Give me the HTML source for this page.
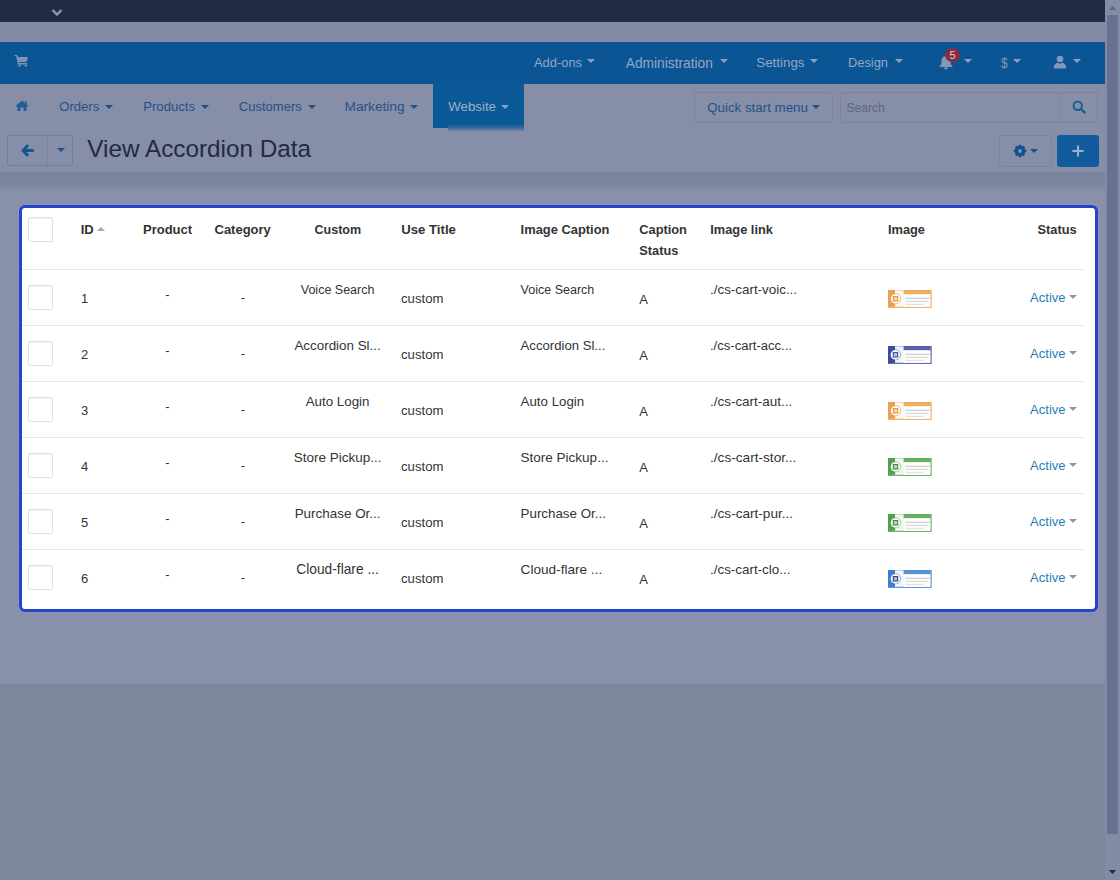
<!DOCTYPE html>
<html><head><meta charset="utf-8">
<style>
*{box-sizing:border-box}
html,body{margin:0;padding:0}
body{width:1120px;height:880px;overflow:hidden;position:relative;background:#7f879f;font-family:"Liberation Sans",sans-serif;}
.abs{position:absolute}
#topdark{left:0;top:0;width:1105px;height:22px;background:#232a43}
#gray1{left:0;top:22px;width:1105px;height:20px;background:#828aa4}
#bluenav{left:0;top:42px;width:1105px;height:42px;background:#0c5594}
#subnav{left:0;top:84px;width:1105px;height:88px;background:#878ea8}
#band{left:0;top:172px;width:1105px;height:17px;background:linear-gradient(#7a829b,#7d859e 60%,#838aa3)}
#content{left:0;top:189px;width:1105px;height:495px;background:#8990aa}
#sb{left:1105px;top:0;width:15px;height:880px;background:#848ba5}
#thumb{left:1107.3px;top:15px;width:10.7px;height:819px;background:#697190;border-radius:1px}
.nav{color:#93a7c5;white-space:nowrap}
.caret{width:0;height:0;border-left:4px solid transparent;border-right:4px solid transparent;border-top:4px solid currentColor;display:inline-block}
.sub{color:#1f5388;white-space:nowrap}
#modal{left:19px;top:204.5px;width:1079px;height:407.5px;background:#fff;border:3px solid #2a42c6;border-radius:6px;box-shadow:0 0 0 1px rgba(125,150,225,0.75)}
.th{font-weight:700;font-size:13px;color:#333;white-space:nowrap;position:absolute}
.td{font-size:13px;color:#333;white-space:nowrap;position:absolute}
.cb{position:absolute;width:24.5px;height:24.5px;border:1px solid #e0e0e0;border-radius:2px;background:#fff;box-shadow:inset 0 1px 1px rgba(0,0,0,0.05)}
.hr{position:absolute;left:3px;width:1062px;height:1px;background:#e8e8e8}
.act{position:absolute;color:#2b8bc4;font-size:13px;white-space:nowrap}
.t{position:absolute;white-space:nowrap}
</style></head>
<body>
<div id="topdark" class="abs"></div>
<svg class="abs" style="left:51px;top:8px" width="12" height="9" viewBox="0 0 12 9"><path d="M1.5 2 L6 6.5 L10.5 2" stroke="#9098b4" stroke-width="2.4" fill="none"/></svg>
<div id="gray1" class="abs"></div>
<div id="bluenav" class="abs"></div>
<div id="subnav" class="abs"></div>
<div id="band" class="abs"></div>
<div id="content" class="abs"></div>
<div id="sb" class="abs"></div>
<div id="thumb" class="abs"></div>
<svg class="abs" style="left:1105px;top:0" width="15" height="15" viewBox="0 0 15 15"><path d="M3.8 10 L7.5 5.8 L11.2 10 Z" fill="#5f6682"/></svg>
<svg class="abs" style="left:1105px;top:865px" width="15" height="15" viewBox="0 0 15 15"><path d="M3.8 5 L7.5 9.2 L11.2 5 Z" fill="#252d48"/></svg>


<!-- top nav -->
<svg class="abs" style="left:14px;top:54px" width="15" height="13" viewBox="0 0 15 13"><path d="M0.5 1 H3 L4 3 H14 L12.5 8 H5 L5.2 9 H13 V10.5 H4 L2.2 2.3 H0.5 Z" fill="#7f93b8"/><circle cx="5.5" cy="11.6" r="1.2" fill="#7f93b8"/><circle cx="12" cy="11.6" r="1.2" fill="#7f93b8"/></svg>
<svg class="abs" style="left:938px;top:55px" width="16" height="15" viewBox="0 0 16 15"><path d="M8 1 C4.5 1 3.5 4 3.5 6.5 C3.5 9.5 2 11 1 12 H15 C14 11 12.5 9.5 12.5 6.5 C12.5 4 11.5 1 8 1 Z" fill="#8597b9"/><path d="M6 12.5 A2 2 0 0 0 10 12.5 Z" fill="#8597b9"/></svg>
<div class="abs" style="left:945px;top:47.5px;width:15px;height:14px;border-radius:50%;background:#8a2c3e;color:#d0d2dc;font-size:11px;font-weight:400;text-align:center;line-height:14px">5</div>
<span class="abs caret" style="left:963.5px;top:59px;color:#8c9fc0"></span>
<div class="abs" style="left:1000.8px;top:54.5px;color:#8597b9;font-size:14px;line-height:16px;transform:scaleX(0.85);transform-origin:left">$</div>
<span class="abs caret" style="left:1013px;top:59px;color:#8c9fc0"></span>
<svg class="abs" style="left:1053px;top:55px" width="14" height="14" viewBox="0 0 14 14"><circle cx="7" cy="4" r="3.3" fill="#8597b9"/><path d="M0.8 13.5 C0.8 9.5 3 8 5 7.8 L7 9 L9 7.8 C11 8 13.2 9.5 13.2 13.5 Z" fill="#8597b9"/></svg>
<span class="abs caret" style="left:1072.5px;top:59px;color:#8c9fc0"></span>

<div class="abs nav" style="left:534px;top:57.38px;font-size:12.9px;line-height:12.9px;">Add-ons</div>
<div class="abs" style="left:587px;top:59.3px;width:0;height:0;border-left:4.0px solid transparent;border-right:4.0px solid transparent;border-top:4px solid #8c9fc0"></div>
<div class="abs nav" style="left:625.8px;top:56.65px;font-size:13.76px;line-height:13.76px;">Administration</div>
<div class="abs" style="left:719.6px;top:59.3px;width:0;height:0;border-left:4.0px solid transparent;border-right:4.0px solid transparent;border-top:4px solid #8c9fc0"></div>
<div class="abs nav" style="left:756.3px;top:56.2px;font-size:13.34px;line-height:13.34px;">Settings</div>
<div class="abs" style="left:810px;top:59.3px;width:0;height:0;border-left:4.0px solid transparent;border-right:4.0px solid transparent;border-top:4px solid #8c9fc0"></div>
<div class="abs nav" style="left:848px;top:57.42px;font-size:12.85px;line-height:12.85px;">Design</div>
<div class="abs" style="left:894.5px;top:59.3px;width:0;height:0;border-left:4.0px solid transparent;border-right:4.0px solid transparent;border-top:4px solid #8c9fc0"></div>
<div class="abs sub" style="left:59.25px;top:100.17px;font-size:13.09px;line-height:13.09px;">Orders</div>
<div class="abs" style="left:105px;top:104.5px;width:0;height:0;border-left:4.0px solid transparent;border-right:4.0px solid transparent;border-top:4px solid #1f5388"></div>
<div class="abs sub" style="left:143.25px;top:100.15px;font-size:13.11px;line-height:13.11px;">Products</div>
<div class="abs" style="left:201px;top:104.5px;width:0;height:0;border-left:4.0px solid transparent;border-right:4.0px solid transparent;border-top:4px solid #1f5388"></div>
<div class="abs sub" style="left:238.8px;top:100.22px;font-size:13.03px;line-height:13.03px;">Customers</div>
<div class="abs" style="left:307.7px;top:104.5px;width:0;height:0;border-left:4.0px solid transparent;border-right:4.0px solid transparent;border-top:4px solid #1f5388"></div>
<div class="abs sub" style="left:344.6px;top:99.68px;font-size:13.67px;line-height:13.67px;">Marketing</div>
<div class="abs" style="left:410px;top:104.5px;width:0;height:0;border-left:4.0px solid transparent;border-right:4.0px solid transparent;border-top:4px solid #1f5388"></div>
<!-- sub nav -->
<svg class="abs" style="left:15px;top:100px" width="14" height="11" viewBox="0 0 14 11"><path d="M7 0.5 L13.5 6 L12.5 7 L11.5 6.2 V11 H8.5 V7.5 H5.5 V11 H2.5 V6.2 L1.5 7 L0.5 6 Z" fill="#1f5d9c"/><rect x="10" y="1" width="1.6" height="3" fill="#1f5d9c"/></svg>
<div class="abs" style="left:433px;top:83px;width:91px;height:45px;background:#0b5896"></div><div class="abs" style="left:448px;top:124px;width:76px;height:7.5px;background:linear-gradient(#0b5896,#3d6a9c 50%,rgba(135,142,168,0))"></div>
<div class="abs sub" style="left:448.3px;top:100.02px;font-size:13.27px;line-height:13.27px;color:#9fb0c8;">Website</div>
<div class="abs" style="left:501px;top:104.5px;width:0;height:0;border-left:4.0px solid transparent;border-right:4.0px solid transparent;border-top:4px solid #8c9fc0"></div>
<div class="abs sub" style="left:707.2px;top:100.81px;font-size:13.34px;line-height:13.34px;">Quick start menu</div>
<div class="abs" style="left:812px;top:105px;width:0;height:0;border-left:4.0px solid transparent;border-right:4.0px solid transparent;border-top:4px solid #1f5388"></div>

<div class="abs" style="left:693.5px;top:91.5px;width:139px;height:31px;border:1px solid #7c839c;border-radius:3px"></div>
<div class="abs" style="left:839.5px;top:91.5px;width:258.5px;height:31px;border:1px solid #7c839c;border-radius:3px"></div>
<div class="abs" style="left:1058.5px;top:92px;width:1px;height:30px;background:#7c839c"></div>
<div class="abs" style="left:846.4px;top:101.6px;font-size:12.1px;line-height:13px;color:#5e6682">Search</div>
<svg class="abs" style="left:1072px;top:99.5px" width="14" height="14" viewBox="0 0 14 14"><circle cx="5.8" cy="5.8" r="4.2" stroke="#1b5d8f" stroke-width="2" fill="none"/><path d="M9 9 L12.5 12.5" stroke="#1b5d8f" stroke-width="2.4" stroke-linecap="round"/></svg>

<!-- title row -->
<div class="abs" style="left:6.5px;top:134.5px;width:66px;height:31px;border:1px solid #767d96;border-radius:2px"></div>
<div class="abs" style="left:47px;top:135px;width:1px;height:30px;background:#7c839c"></div>
<svg class="abs" style="left:21px;top:144px" width="13" height="13" viewBox="0 0 13 13"><path d="M6.2 2 L2 6.5 L6.2 11 M2.8 6.5 H11.5" stroke="#16558f" stroke-width="3" fill="none" stroke-linecap="round" stroke-linejoin="round"/></svg>
<span class="abs caret" style="left:56.5px;top:147.7px;color:#16558f"></span>
<div class="abs" style="left:87.3px;top:137px;font-size:24.3px;line-height:24.3px;color:#232a45;white-space:nowrap">View Accordion Data</div>
<div class="abs" style="left:999px;top:135px;width:52.5px;height:32px;border:1px solid #7c839c;border-radius:3px"></div>
<svg class="abs" style="left:1013px;top:144px" width="14" height="14" viewBox="0 0 14 14"><g fill="#164e88"><circle cx="7" cy="7" r="5"/><rect x="5.6" y="0.8" width="2.8" height="12.4" rx="0.6"/><rect x="0.8" y="5.6" width="12.4" height="2.8" rx="0.6"/><rect x="5.6" y="0.8" width="2.8" height="12.4" rx="0.6" transform="rotate(45 7 7)"/><rect x="5.6" y="0.8" width="2.8" height="12.4" rx="0.6" transform="rotate(-45 7 7)"/></g><circle cx="7" cy="7" r="1.9" fill="#6f98c8"/></svg>
<span class="abs caret" style="left:1030px;top:148.7px;color:#164e88"></span>
<div class="abs" style="left:1057px;top:135px;width:41.5px;height:32px;background:#0f5b9c;border-radius:3px"></div>
<svg class="abs" style="left:1072px;top:144.5px" width="12" height="12" viewBox="0 0 12 12"><path d="M6 1.2 V10.8 M1.2 6 H10.8" stroke="#9eb0cc" stroke-width="2.1" stroke-linecap="round"/></svg>

<div id="modal" class="abs">
</div>






<!--TABLE-->
<div class="cb" style="left:28px;top:217px"></div>
<div class="t" style="left:80.75px;top:222.90px;font-size:13px;line-height:13px;font-weight:700;color:#333;">ID</div>
<div class="abs" style="left:97px;top:227px;width:0;height:0;border-left:4px solid transparent;border-right:4px solid transparent;border-bottom:4px solid #aaa"></div>
<div class="t" style="left:143px;top:222.90px;font-size:13px;line-height:13px;font-weight:700;color:#333;">Product</div>
<div class="t" style="left:214.5px;top:222.90px;font-size:13px;line-height:13px;font-weight:700;color:#333;">Category</div>
<div class="t" style="left:314.6px;top:224.02px;font-size:12.5px;line-height:12.5px;font-weight:700;color:#333;">Custom</div>
<div class="t" style="left:401.2px;top:222.73px;font-size:13.2px;line-height:13.2px;font-weight:700;color:#333;">Use Title</div>
<div class="t" style="left:520.6px;top:223.58px;font-size:12.9px;line-height:12.9px;font-weight:700;color:#333;">Image Caption</div>
<div class="t" style="left:639.3px;top:223.66px;font-size:12.8px;line-height:12.8px;font-weight:700;color:#333;">Caption</div>
<div class="t" style="left:639.3px;top:245.06px;font-size:12.8px;line-height:12.8px;font-weight:700;color:#333;">Status</div>
<div class="t" style="left:710.3px;top:223.66px;font-size:12.8px;line-height:12.8px;font-weight:700;color:#333;">Image link</div>
<div class="t" style="left:888px;top:223.66px;font-size:12.8px;line-height:12.8px;font-weight:700;color:#333;">Image</div>
<div class="t" style="left:876.5999999999999px;width:200px;text-align:right;top:223.66px;font-size:12.8px;line-height:12.8px;font-weight:700;color:#333">Status</div>
<div class="hr" style="left:22px;top:269px"></div>
<div class="cb" style="left:28px;top:285px"></div>
<div class="t" style="left:81px;top:292.00px;font-size:13px;line-height:13px;font-weight:400;color:#333;">1</div>
<div class="t" style="left:67.5px;width:200px;text-align:center;top:288.00px;font-size:13px;line-height:13px;font-weight:400;color:#333">-</div>
<div class="t" style="left:143px;width:200px;text-align:center;top:291.00px;font-size:13px;line-height:13px;font-weight:400;color:#333">-</div>
<div class="t" style="left:237.60000000000002px;width:200px;text-align:center;top:283.62px;font-size:12.5px;line-height:12.5px;font-weight:400;color:#333">Voice Search</div>
<div class="t" style="left:401px;top:291.83px;font-size:13.2px;line-height:13.2px;font-weight:400;color:#333;">custom</div>
<div class="t" style="left:520.6px;top:283.62px;font-size:12.5px;line-height:12.5px;font-weight:400;color:#333;">Voice Search</div>
<div class="t" style="left:639.3px;top:292.70px;font-size:13px;line-height:13px;font-weight:400;color:#333;">A</div>
<div class="t" style="left:710px;top:282.86px;font-size:13.4px;line-height:13.4px;font-weight:400;color:#333;">./cs-cart-voic...</div>
<svg class="abs" style="left:888px;top:290px" width="44" height="18" viewBox="0 0 44 18"><rect width="43.6" height="17.8" fill="#eea04a"/><rect x="7" y="0.3" width="35.4" height="16.5" fill="#fdf6e8"/><rect x="15.6" y="0" width="26.8" height="4.4" fill="#eea04a" opacity="0.85"/><rect x="15.6" y="4.4" width="26.8" height="12.4" fill="#fff"/><circle cx="7.5" cy="8.8" r="5.1" fill="#fff" stroke="#b06a20" stroke-width="0.7" stroke-opacity="0.6"/><rect x="5.3" y="6.6" width="4.4" height="4.4" fill="#e8902e" opacity="0.35"/><rect x="5.3" y="6.6" width="4.4" height="4.4" fill="none" stroke="#e8902e" stroke-width="1.1"/><rect x="17.5" y="7.8" width="24" height="1" fill="#c4c4c4"/><rect x="17.5" y="10.8" width="23" height="1" fill="#d2d2d2"/><rect x="17.5" y="13.8" width="18" height="1" fill="#dadada"/></svg>
<div class="t" style="left:1030.1px;top:290.70px;font-size:13px;line-height:13px;font-weight:400;color:#2a80b6;">Active</div>
<div class="abs" style="left:1069px;top:295.2px;width:0;height:0;border-left:4.0px solid transparent;border-right:4.0px solid transparent;border-top:4px solid #999"></div>
<div class="hr" style="left:22px;top:325px"></div>
<div class="cb" style="left:28px;top:341px"></div>
<div class="t" style="left:81px;top:348.00px;font-size:13px;line-height:13px;font-weight:400;color:#333;">2</div>
<div class="t" style="left:67.5px;width:200px;text-align:center;top:344.00px;font-size:13px;line-height:13px;font-weight:400;color:#333">-</div>
<div class="t" style="left:143px;width:200px;text-align:center;top:347.00px;font-size:13px;line-height:13px;font-weight:400;color:#333">-</div>
<div class="t" style="left:237.60000000000002px;width:200px;text-align:center;top:338.86px;font-size:13.4px;line-height:13.4px;font-weight:400;color:#333">Accordion Sl...</div>
<div class="t" style="left:401px;top:347.83px;font-size:13.2px;line-height:13.2px;font-weight:400;color:#333;">custom</div>
<div class="t" style="left:520.6px;top:339.07px;font-size:13.15px;line-height:13.15px;font-weight:400;color:#333;">Accordion Sl...</div>
<div class="t" style="left:639.3px;top:348.70px;font-size:13px;line-height:13px;font-weight:400;color:#333;">A</div>
<div class="t" style="left:710px;top:339.15px;font-size:13.05px;line-height:13.05px;font-weight:400;color:#333;">./cs-cart-acc...</div>
<svg class="abs" style="left:888px;top:346px" width="44" height="18" viewBox="0 0 44 18"><rect width="43.6" height="17.8" fill="#3c4b9e"/><rect x="7" y="0.3" width="35.4" height="16.5" fill="#f1f3fa"/><rect x="15.6" y="0" width="26.8" height="4.4" fill="#3c4b9e" opacity="0.85"/><rect x="15.6" y="4.4" width="26.8" height="12.4" fill="#fff"/><circle cx="7.5" cy="8.8" r="5.1" fill="#fff" stroke="#2a3478" stroke-width="0.7" stroke-opacity="0.6"/><rect x="5.3" y="6.6" width="4.4" height="4.4" fill="#3c4b9e" opacity="0.35"/><rect x="5.3" y="6.6" width="4.4" height="4.4" fill="none" stroke="#3c4b9e" stroke-width="1.1"/><rect x="17.5" y="7.8" width="24" height="1" fill="#c4c4c4"/><rect x="17.5" y="10.8" width="23" height="1" fill="#d2d2d2"/><rect x="17.5" y="13.8" width="18" height="1" fill="#dadada"/></svg>
<div class="t" style="left:1030.1px;top:346.70px;font-size:13px;line-height:13px;font-weight:400;color:#2a80b6;">Active</div>
<div class="abs" style="left:1069px;top:351.2px;width:0;height:0;border-left:4.0px solid transparent;border-right:4.0px solid transparent;border-top:4px solid #999"></div>
<div class="hr" style="left:22px;top:381px"></div>
<div class="cb" style="left:28px;top:397px"></div>
<div class="t" style="left:81px;top:404.00px;font-size:13px;line-height:13px;font-weight:400;color:#333;">3</div>
<div class="t" style="left:67.5px;width:200px;text-align:center;top:400.00px;font-size:13px;line-height:13px;font-weight:400;color:#333">-</div>
<div class="t" style="left:143px;width:200px;text-align:center;top:403.00px;font-size:13px;line-height:13px;font-weight:400;color:#333">-</div>
<div class="t" style="left:237.60000000000002px;width:200px;text-align:center;top:394.90px;font-size:13.35px;line-height:13.35px;font-weight:400;color:#333">Auto Login</div>
<div class="t" style="left:401px;top:403.83px;font-size:13.2px;line-height:13.2px;font-weight:400;color:#333;">custom</div>
<div class="t" style="left:520.6px;top:394.94px;font-size:13.3px;line-height:13.3px;font-weight:400;color:#333;">Auto Login</div>
<div class="t" style="left:639.3px;top:404.70px;font-size:13px;line-height:13px;font-weight:400;color:#333;">A</div>
<div class="t" style="left:710px;top:394.81px;font-size:13.45px;line-height:13.45px;font-weight:400;color:#333;">./cs-cart-aut...</div>
<svg class="abs" style="left:888px;top:402px" width="44" height="18" viewBox="0 0 44 18"><rect width="43.6" height="17.8" fill="#eea04a"/><rect x="7" y="0.3" width="35.4" height="16.5" fill="#fdf6e8"/><rect x="15.6" y="0" width="26.8" height="4.4" fill="#eea04a" opacity="0.85"/><rect x="15.6" y="4.4" width="26.8" height="12.4" fill="#fff"/><circle cx="7.5" cy="8.8" r="5.1" fill="#fff" stroke="#b06a20" stroke-width="0.7" stroke-opacity="0.6"/><rect x="5.3" y="6.6" width="4.4" height="4.4" fill="#e8902e" opacity="0.35"/><rect x="5.3" y="6.6" width="4.4" height="4.4" fill="none" stroke="#e8902e" stroke-width="1.1"/><rect x="17.5" y="7.8" width="24" height="1" fill="#c4c4c4"/><rect x="17.5" y="10.8" width="23" height="1" fill="#d2d2d2"/><rect x="17.5" y="13.8" width="18" height="1" fill="#dadada"/></svg>
<div class="t" style="left:1030.1px;top:402.70px;font-size:13px;line-height:13px;font-weight:400;color:#2a80b6;">Active</div>
<div class="abs" style="left:1069px;top:407.2px;width:0;height:0;border-left:4.0px solid transparent;border-right:4.0px solid transparent;border-top:4px solid #999"></div>
<div class="hr" style="left:22px;top:437px"></div>
<div class="cb" style="left:28px;top:453px"></div>
<div class="t" style="left:81px;top:460.00px;font-size:13px;line-height:13px;font-weight:400;color:#333;">4</div>
<div class="t" style="left:67.5px;width:200px;text-align:center;top:456.00px;font-size:13px;line-height:13px;font-weight:400;color:#333">-</div>
<div class="t" style="left:143px;width:200px;text-align:center;top:459.00px;font-size:13px;line-height:13px;font-weight:400;color:#333">-</div>
<div class="t" style="left:237.60000000000002px;width:200px;text-align:center;top:450.77px;font-size:13.5px;line-height:13.5px;font-weight:400;color:#333">Store Pickup...</div>
<div class="t" style="left:401px;top:459.83px;font-size:13.2px;line-height:13.2px;font-weight:400;color:#333;">custom</div>
<div class="t" style="left:520.6px;top:450.77px;font-size:13.5px;line-height:13.5px;font-weight:400;color:#333;">Store Pickup...</div>
<div class="t" style="left:639.3px;top:460.70px;font-size:13px;line-height:13px;font-weight:400;color:#333;">A</div>
<div class="t" style="left:710px;top:450.65px;font-size:13.65px;line-height:13.65px;font-weight:400;color:#333;">./cs-cart-stor...</div>
<svg class="abs" style="left:888px;top:458px" width="44" height="18" viewBox="0 0 44 18"><rect width="43.6" height="17.8" fill="#4ea44e"/><rect x="7" y="0.3" width="35.4" height="16.5" fill="#eff8ef"/><rect x="15.6" y="0" width="26.8" height="4.4" fill="#4ea44e" opacity="0.85"/><rect x="15.6" y="4.4" width="26.8" height="12.4" fill="#fff"/><circle cx="7.5" cy="8.8" r="5.1" fill="#fff" stroke="#2e6e2e" stroke-width="0.7" stroke-opacity="0.6"/><rect x="5.3" y="6.6" width="4.4" height="4.4" fill="#3a8a3a" opacity="0.35"/><rect x="5.3" y="6.6" width="4.4" height="4.4" fill="none" stroke="#3a8a3a" stroke-width="1.1"/><rect x="17.5" y="7.8" width="24" height="1" fill="#c4c4c4"/><rect x="17.5" y="10.8" width="23" height="1" fill="#d2d2d2"/><rect x="17.5" y="13.8" width="18" height="1" fill="#dadada"/></svg>
<div class="t" style="left:1030.1px;top:458.70px;font-size:13px;line-height:13px;font-weight:400;color:#2a80b6;">Active</div>
<div class="abs" style="left:1069px;top:463.2px;width:0;height:0;border-left:4.0px solid transparent;border-right:4.0px solid transparent;border-top:4px solid #999"></div>
<div class="hr" style="left:22px;top:493px"></div>
<div class="cb" style="left:28px;top:509px"></div>
<div class="t" style="left:81px;top:516.00px;font-size:13px;line-height:13px;font-weight:400;color:#333;">5</div>
<div class="t" style="left:67.5px;width:200px;text-align:center;top:512.00px;font-size:13px;line-height:13px;font-weight:400;color:#333">-</div>
<div class="t" style="left:143px;width:200px;text-align:center;top:515.00px;font-size:13px;line-height:13px;font-weight:400;color:#333">-</div>
<div class="t" style="left:237.60000000000002px;width:200px;text-align:center;top:506.81px;font-size:13.45px;line-height:13.45px;font-weight:400;color:#333">Purchase Or...</div>
<div class="t" style="left:401px;top:515.83px;font-size:13.2px;line-height:13.2px;font-weight:400;color:#333;">custom</div>
<div class="t" style="left:520.6px;top:506.90px;font-size:13.35px;line-height:13.35px;font-weight:400;color:#333;">Purchase Or...</div>
<div class="t" style="left:639.3px;top:516.70px;font-size:13px;line-height:13px;font-weight:400;color:#333;">A</div>
<div class="t" style="left:710px;top:506.69px;font-size:13.6px;line-height:13.6px;font-weight:400;color:#333;">./cs-cart-pur...</div>
<svg class="abs" style="left:888px;top:514px" width="44" height="18" viewBox="0 0 44 18"><rect width="43.6" height="17.8" fill="#4ea44e"/><rect x="7" y="0.3" width="35.4" height="16.5" fill="#eff8ef"/><rect x="15.6" y="0" width="26.8" height="4.4" fill="#4ea44e" opacity="0.85"/><rect x="15.6" y="4.4" width="26.8" height="12.4" fill="#fff"/><circle cx="7.5" cy="8.8" r="5.1" fill="#fff" stroke="#2e6e2e" stroke-width="0.7" stroke-opacity="0.6"/><rect x="5.3" y="6.6" width="4.4" height="4.4" fill="#3a8a3a" opacity="0.35"/><rect x="5.3" y="6.6" width="4.4" height="4.4" fill="none" stroke="#3a8a3a" stroke-width="1.1"/><rect x="17.5" y="7.8" width="24" height="1" fill="#c4c4c4"/><rect x="17.5" y="10.8" width="23" height="1" fill="#d2d2d2"/><rect x="17.5" y="13.8" width="18" height="1" fill="#dadada"/></svg>
<div class="t" style="left:1030.1px;top:514.70px;font-size:13px;line-height:13px;font-weight:400;color:#2a80b6;">Active</div>
<div class="abs" style="left:1069px;top:519.2px;width:0;height:0;border-left:4.0px solid transparent;border-right:4.0px solid transparent;border-top:4px solid #999"></div>
<div class="hr" style="left:22px;top:549px"></div>
<div class="cb" style="left:28px;top:565px"></div>
<div class="t" style="left:81px;top:572.00px;font-size:13px;line-height:13px;font-weight:400;color:#333;">6</div>
<div class="t" style="left:67.5px;width:200px;text-align:center;top:568.00px;font-size:13px;line-height:13px;font-weight:400;color:#333">-</div>
<div class="t" style="left:143px;width:200px;text-align:center;top:571.00px;font-size:13px;line-height:13px;font-weight:400;color:#333">-</div>
<div class="t" style="left:237.60000000000002px;width:200px;text-align:center;top:562.56px;font-size:13.75px;line-height:13.75px;font-weight:400;color:#333">Cloud-flare ...</div>
<div class="t" style="left:401px;top:571.83px;font-size:13.2px;line-height:13.2px;font-weight:400;color:#333;">custom</div>
<div class="t" style="left:520.6px;top:562.69px;font-size:13.6px;line-height:13.6px;font-weight:400;color:#333;">Cloud-flare ...</div>
<div class="t" style="left:639.3px;top:572.70px;font-size:13px;line-height:13px;font-weight:400;color:#333;">A</div>
<div class="t" style="left:710px;top:562.86px;font-size:13.4px;line-height:13.4px;font-weight:400;color:#333;">./cs-cart-clo...</div>
<svg class="abs" style="left:888px;top:570px" width="44" height="18" viewBox="0 0 44 18"><rect width="43.6" height="17.8" fill="#3f7ed6"/><rect x="7" y="0.3" width="35.4" height="16.5" fill="#eff5fd"/><rect x="15.6" y="0" width="26.8" height="4.4" fill="#3f7ed6" opacity="0.85"/><rect x="15.6" y="4.4" width="26.8" height="12.4" fill="#fff"/><circle cx="7.5" cy="8.8" r="5.1" fill="#fff" stroke="#2a3f80" stroke-width="0.7" stroke-opacity="0.6"/><rect x="5.3" y="6.6" width="4.4" height="4.4" fill="#2a3f80" opacity="0.35"/><rect x="5.3" y="6.6" width="4.4" height="4.4" fill="none" stroke="#2a3f80" stroke-width="1.1"/><rect x="17.5" y="7.8" width="24" height="1" fill="#c4c4c4"/><rect x="17.5" y="10.8" width="23" height="1" fill="#d2d2d2"/><rect x="17.5" y="13.8" width="18" height="1" fill="#dadada"/></svg>
<div class="t" style="left:1030.1px;top:570.70px;font-size:13px;line-height:13px;font-weight:400;color:#2a80b6;">Active</div>
<div class="abs" style="left:1069px;top:575.2px;width:0;height:0;border-left:4.0px solid transparent;border-right:4.0px solid transparent;border-top:4px solid #999"></div>
<!--/TABLE-->
</body></html>
